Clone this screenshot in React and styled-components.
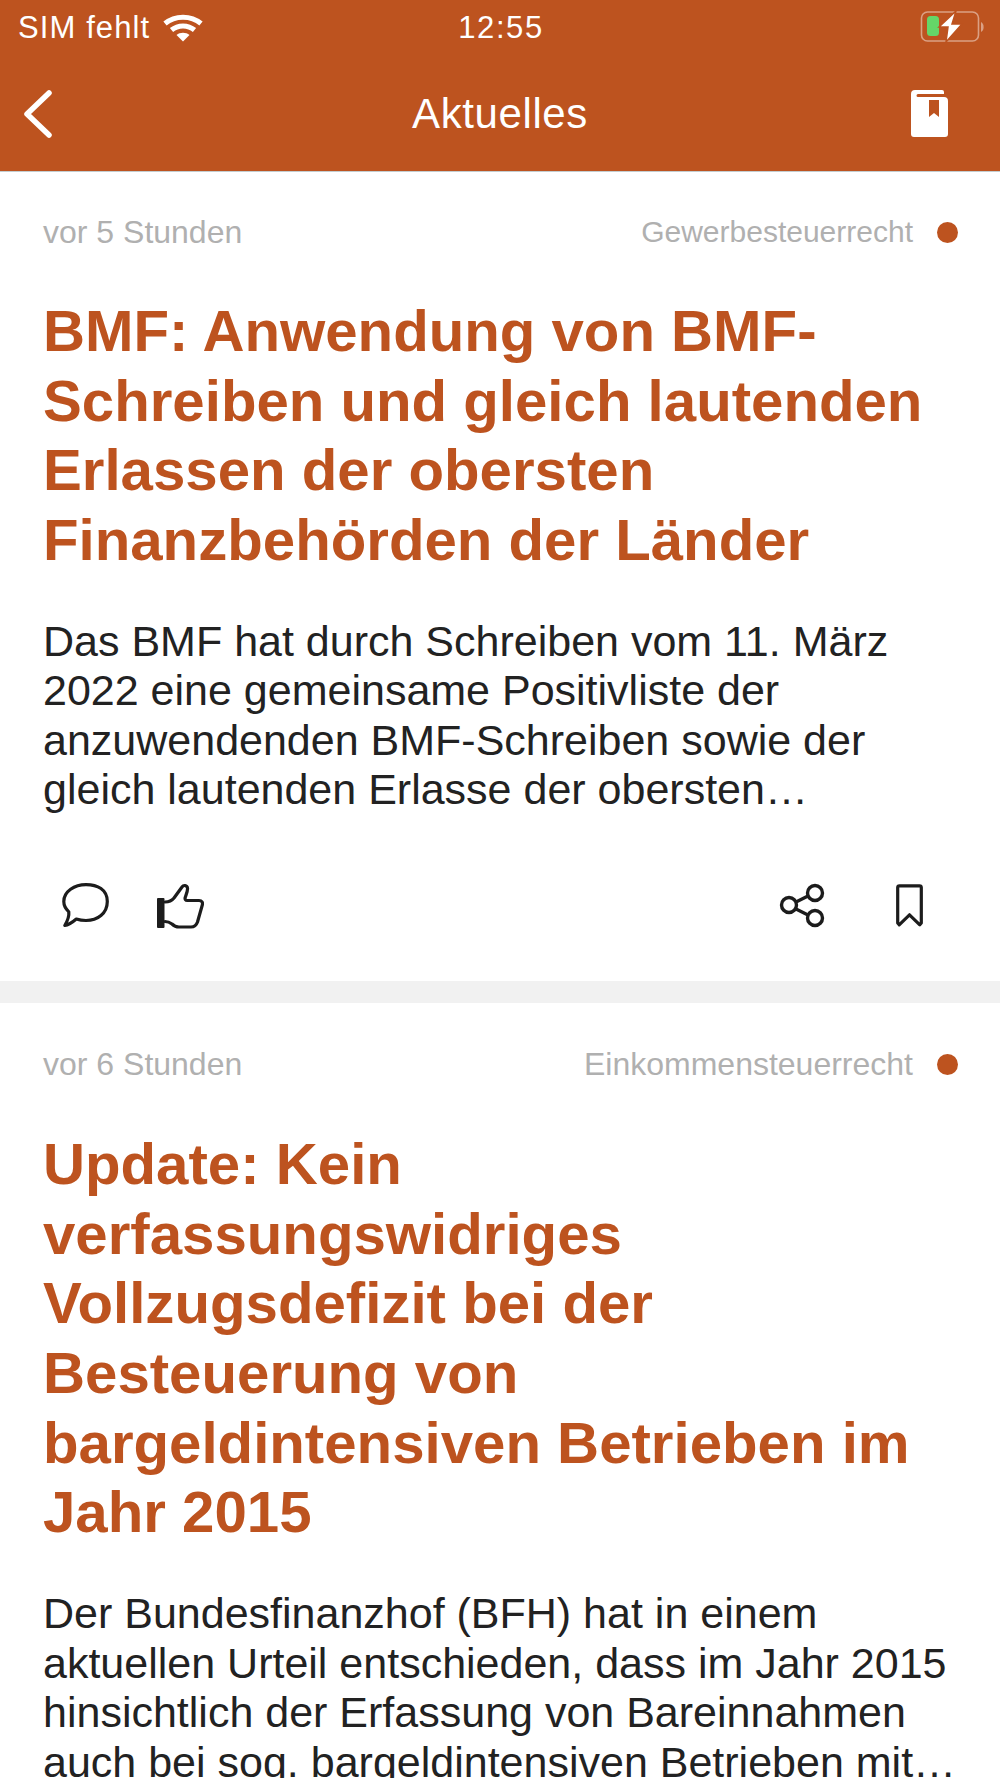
import React from 'react';
import styled, { createGlobalStyle } from 'styled-components';

const Global = createGlobalStyle`
  html, body { margin: 0; padding: 0; background: #fff; }
  body { font-family: "Liberation Sans", Arial, sans-serif; }
`;
const Page = styled.div`
  width: 1000px; height: 1778px; overflow: hidden; background: #fff;
  display: flex; flex-direction: column;
`;
const Header = styled.header`
  flex: none; height: 171px; background: #bd531f; border-bottom: 1px solid #c3cdd0;
  display: flex; flex-direction: column; color: #fff;
`;
const StatusBar = styled.div`
  height: 56px; padding: 0 14px 0 18px; display: grid; grid-template-columns: 1fr auto 1fr; align-items: center;
`;
const StatusLeft = styled.div`
  display: flex; align-items: center; gap: 13px; font-size: 31px; letter-spacing: 1.1px;
`;
const Clock = styled.div`
  font-size: 31px; letter-spacing: 1.6px; transform: translateX(-1px);
`;
const StatusRight = styled.div`
  display: flex; justify-content: flex-end; margin-top: -2px;
`;
const NavBar = styled.div`
  height: 115px; display: grid; grid-template-columns: 1fr auto 1fr; align-items: center;
  padding: 0 22px;
`;
const NavTitle = styled.h1`
  margin: 0; font-size: 42px; font-weight: 400; letter-spacing: 0.6px;
`;
const NavRight = styled.div`
  display: flex; justify-content: flex-end; padding-right: 30px;
`;
const IconSlot = styled.div`
  display: flex; align-items: center;
`;
const Article = styled.article`
  padding: ${p => p.$first ? '43px' : '45px'} 43px 0;
`;
const Meta = styled.div`
  display: flex; justify-content: space-between; align-items: center; height: 34px;
  font-size: 30px; color: #b0b0b0;
`;
const Time = styled.span`
  font-size: 32px;
`;
const Category = styled.div`
  display: flex; align-items: center; gap: 24px; margin-right: -1px;
  font-size: ${p => p.$size}px;
`;
const Dot = styled.span`
  width: 21px; height: 21px; border-radius: 50%; background: #bd531f;
`;
const Title = styled.h2`
  margin: 47px 0 0; font-size: 58.2px; line-height: 69.7px; font-weight: 700; color: #bd531f;
`;
const Body = styled.p`
  margin: 42px 0 0; font-size: 43px; line-height: 49.5px; color: #222;
`;
const Actions = styled.div`
  height: 68px; margin-top: 57px; margin-bottom: 41px; display: flex; justify-content: space-between; align-items: center;
  padding: 0 34px 0 19px;
`;
const ActionGroup = styled.div`
  display: flex; align-items: center; gap: ${p => p.$gap}px;
`;
const Separator = styled.div`
  flex: none; height: 22px; background: #f1f1f1;
`;

const Wifi = () => (
  <svg width="40" height="28" viewBox="0 0 40 28" fill="none" stroke="#fff" strokeWidth="5">
    <path d="M2 9.500C12 1 28 1 38 9.500" />
    <path d="M8.500 16C15 10.500 25 10.500 31.500 16" />
    <path d="M20 27.500 13.500 21c3.500-3 9.500-3 13 0z" fill="#fff" stroke="none" />
  </svg>
);
const Battery = () => (
  <svg width="66" height="32" viewBox="0 0 66 32" fill="none">
    <rect x="1.500" y="1" width="57" height="29" rx="6" stroke="#fff" strokeOpacity=".45" strokeWidth="1.600" />
    <path d="M61 11c2 1 2.600 3 2.600 5s-.6 4-2.600 5z" fill="#fff" fillOpacity=".45" />
    <rect x="7" y="5" width="12" height="20" rx="3.500" fill="#65d668" />
    <path d="M36 0 19 16h9l-2 15 16-18H32z" fill="#fff" stroke="#bd531f" strokeWidth="1.500" />
  </svg>
);
const Back = () => (
  <svg width="32" height="48" viewBox="0 0 32 48" fill="none" stroke="#fff" strokeWidth="5.500" strokeLinecap="round" strokeLinejoin="round">
    <path d="M27 3 5 24l22 21" />
  </svg>
);
const Book = () => (
  <svg width="37" height="47" viewBox="0 0 37 47">
    <path fillRule="evenodd" fill="#fff" d="M4 0h27a2 2 0 0 1 2 2v2H7a1.500 1.500 0 0 0 0 3h26a4 4 0 0 1 4 4v33a3 3 0 0 1-3 3H3a3 3 0 0 1-3-3V4a4 4 0 0 1 4-4zM18 10v17l5-4 5 4V10z" />
  </svg>
);
const Comment = () => (
  <svg width="47" height="45" viewBox="0 0 47 45" fill="none" stroke="#1c1c1c" strokeWidth="3.200" strokeLinejoin="round">
    <path d="M24 1.600C12.500 1.600 1.800 8.500 1.800 18.500c0 4 2 7.500 5 10.300.5 4.500-1.500 9.500-4 13.700 4-.5 8-3.500 11.500-6.500 3 1 6 1.500 9.700 1.500 11.500 0 21.300-7 21.300-19S35.500 1.600 24 1.600z" />
  </svg>
);
const Thumb = () => (
  <svg width="47" height="46" viewBox="0 0 47 46" fill="none" stroke="#1c1c1c" strokeWidth="3.200" strokeLinejoin="round" strokeLinecap="round">
    <rect x="0" y="15" width="7.500" height="30" rx="1" fill="#1c1c1c" stroke="none" />
    <path d="M8 19c4 0 7-1.500 9-4l8-11c1.500-2.200 5-2 5.500 1 .4 3-1.500 7-2.300 9.500-.5 1.800.3 3 2 3H42c3 0 4 2 3.300 4.500L40.500 39c-1.300 3.600-3.500 5-6.500 5H22c-3 0-5-1-7-3-2-1.500-4.500-2.500-7-2.500" />
  </svg>
);
const Share = () => (
  <svg width="48" height="46" viewBox="0 0 48 46" fill="none" stroke="#1c1c1c" strokeWidth="3.400">
    <circle cx="10" cy="22" r="7.500" />
    <circle cx="36" cy="10" r="7.500" />
    <circle cx="36" cy="35" r="7.500" />
    <path d="M17 19 29 13M17 26 29 32" />
  </svg>
);
const BookmarkIcon = () => (
  <svg width="27" height="43" viewBox="0 0 27 43" fill="none" stroke="#1c1c1c" strokeWidth="3.200" strokeLinejoin="round">
    <path d="M3.500 1.800h20a1.800 1.800 0 0 1 1.800 1.800V39l-1.500 1.800-10.300-10-10.300 10L1.700 39V3.600a1.800 1.800 0 0 1 1.800-1.800z" />
  </svg>
);

const articles = [
  {
    time: 'vor 5 Stunden',
    category: 'Gewerbesteuerrecht',
    categorySize: 30,
    title: ['BMF: Anwendung von BMF-', 'Schreiben und gleich lautenden', 'Erlassen der obersten', 'Finanzbehörden der Länder'],
    body: ['Das BMF hat durch Schreiben vom 11. März', '2022 eine gemeinsame Positivliste der', 'anzuwendenden BMF-Schreiben sowie der', 'gleich lautenden Erlasse der obersten…'],
  },
  {
    time: 'vor 6 Stunden',
    category: 'Einkommensteuerrecht',
    categorySize: 32,
    title: ['Update: Kein', 'verfassungswidriges', 'Vollzugsdefizit bei der', 'Besteuerung von', 'bargeldintensiven Betrieben im', 'Jahr 2015'],
    body: ['Der Bundesfinanzhof (BFH) hat in einem', 'aktuellen Urteil entschieden, dass im Jahr 2015', 'hinsichtlich der Erfassung von Bareinnahmen', 'auch bei sog. bargeldintensiven Betrieben mit…'],
  },
];

const Lines = ({ lines }) => lines.map((l, i) => <React.Fragment key={i}>{l}{i < lines.length - 1 && <br />}</React.Fragment>);

export default function App() {
  return (
    <Page>
      <Global />
      <Header>
        <StatusBar>
          <StatusLeft>SIM fehlt <Wifi /></StatusLeft>
          <Clock>12:55</Clock>
          <StatusRight><Battery /></StatusRight>
        </StatusBar>
        <NavBar>
          <IconSlot><Back /></IconSlot>
          <NavTitle>Aktuelles</NavTitle>
          <NavRight><Book /></NavRight>
        </NavBar>
      </Header>
      {articles.map((a, i) => (
        <React.Fragment key={a.time}>
          <Article $first={i === 0}>
            <Meta>
              <Time>{a.time}</Time>
              <Category $size={a.categorySize}>{a.category}<Dot /></Category>
            </Meta>
            <Title><Lines lines={a.title} /></Title>
            <Body><Lines lines={a.body} /></Body>
            {i === 0 && (
              <Actions>
                <ActionGroup $gap={48}><Comment /><Thumb /></ActionGroup>
                <ActionGroup $gap={69}><Share /><BookmarkIcon /></ActionGroup>
              </Actions>
            )}
          </Article>
          {i === 0 && <Separator />}
        </React.Fragment>
      ))}
    </Page>
  );
}
